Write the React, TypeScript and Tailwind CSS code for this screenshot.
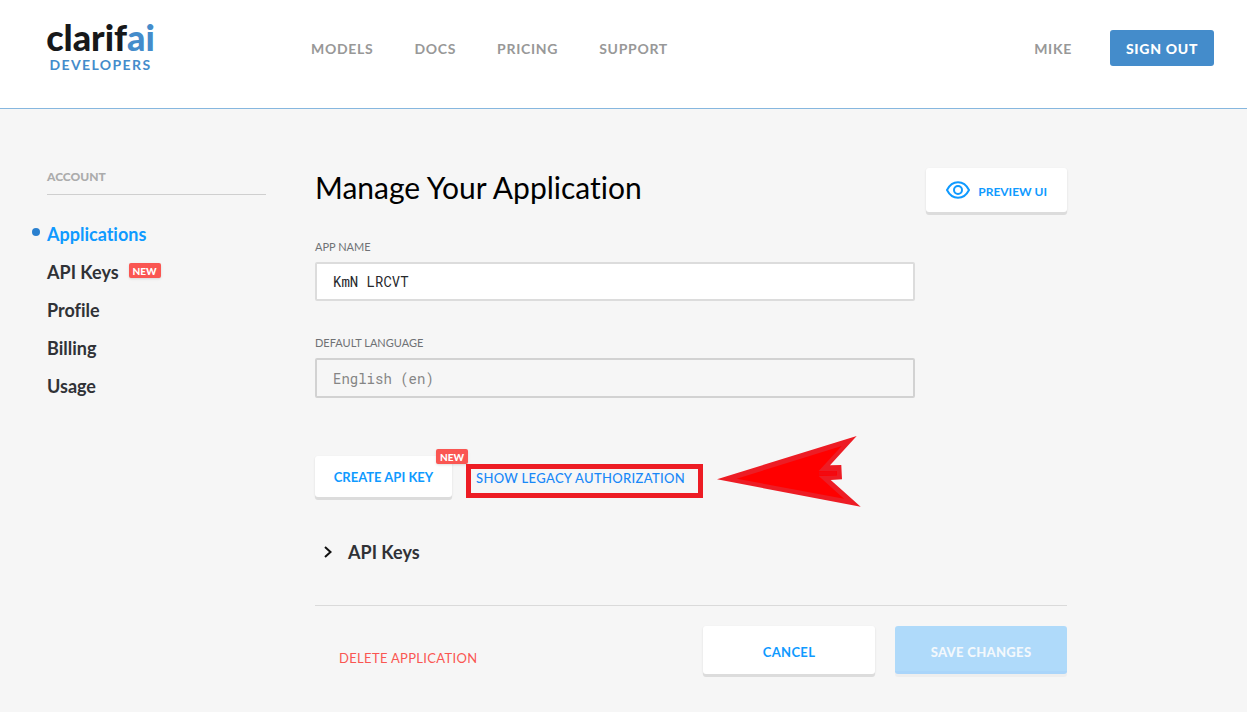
import type { ReactNode } from "react";

const navLinks = ["MODELS", "DOCS", "PRICING", "SUPPORT"];

const accountLinks = [
  { label: "Applications", active: true },
  { label: "API Keys", isNew: true },
  { label: "Profile" },
  { label: "Billing" },
  { label: "Usage" },
];

function NewBadge() {
  return (
    <span className="flex h-[15px] w-8 items-center justify-center rounded-xs bg-[#fa5652] pt-px text-[10px] leading-none font-black text-white shadow-sm">
      NEW
    </span>
  );
}

function RaisedButton({ className, children }: { className: string; children: ReactNode }) {
  return (
    <button
      type="button"
      className={`flex items-center justify-center rounded-[3px] bg-white font-bold text-[#0f9aff] shadow-[0_3px_0_#dcdcdc,0_1px_2px_#d8d8d8] ${className}`}
    >
      {children}
    </button>
  );
}

function EyeIcon() {
  return (
    <svg className="h-[18px] w-6" viewBox="0 0 24 18" fill="none" stroke="currentColor" strokeWidth="2" aria-hidden="true">
      <path d="M1 9C3.5 4 7.4 1.2 12 1.2S20.500 4 23 9c-2.500 5-6.400 7.800-11 7.800S3.500 14 1 9Z" />
      <circle cx="12" cy="9" r="4" />
    </svg>
  );
}

function Logo() {
  return (
    <a href="#" className="flex w-[107px] flex-col items-center">
      <span className="text-[36px] leading-9 font-black text-[#17181a]">
        clarif<span className="text-[#448ccb]">ai</span>
      </span>
      <span className="mt-0.5 text-sm leading-4 font-bold tracking-widest text-[#448ccb]">DEVELOPERS</span>
    </a>
  );
}

function Arrow() {
  return (
    <svg className="h-[72px] w-[145px]" viewBox="0 0 145 72" aria-hidden="true">
      <path d="M0 44.300 139.700 1 113 30.300 124.300 30 125 44.300 113.700 45 143.700 71.700Z" fill="#ed1c24" />
      <path d="M19.700 43.700 124.700 11 101.700 36 120 36v4.500l-18.300.5 25.300 22.700Z" fill="#f00" />
      <path d="M102 38.500 119.500 38" stroke="#f30910" strokeWidth="4" />
    </svg>
  );
}

export default function App() {
  return (
    <div className="min-h-screen bg-[#f6f6f6] font-[Lato,sans-serif] text-[#303236] [font-variant-ligatures:none]">
      <header className="flex h-[109px] items-start border-b border-[#86b7df] bg-white pr-[33px] pl-[47px]">
        <div className="w-[264px] shrink-0 pt-[19px]">
          <Logo />
        </div>
        <nav className="flex flex-1 gap-[41px] pt-[39px]">
          {navLinks.map((label) => (
            <a key={label} href="#" className="text-sm leading-5 font-bold tracking-wider text-[#989898]">
              {label}
            </a>
          ))}
        </nav>
        <div className="flex items-start gap-[38px] pt-[30px]">
          <a href="#" className="pt-[9px] text-sm leading-5 font-bold tracking-wider text-[#989898]">
            MIKE
          </a>
          <button type="button" className="h-9 w-[104px] rounded-[3px] bg-[#448ccb] pt-px text-sm font-black tracking-wider text-white">
            SIGN OUT
          </button>
        </div>
      </header>

      <div className="flex items-start gap-[49px] pt-[59px] pb-8 pl-[47px]">
        <aside className="w-[219px] shrink-0">
          <h2 className="border-b border-[#cfcfcf] pb-2 text-xs leading-[18px] font-black text-[#acacac]">ACCOUNT</h2>
          <ul className="mt-5">
            {accountLinks.map(({ label, active, isNew }) => (
              <li key={label} className="relative flex h-[38px] items-center gap-[10px]">
                {active && <span className="absolute top-[13px] left-[-15px] size-2 rounded-full bg-[#2a80cf]" />}
                <a href="#" className={active ? "text-lg font-bold text-[#0f9aff]" : "text-lg font-bold"}>
                  {label}
                </a>
                {isNew && (
                  <div className="pb-1">
                    <NewBadge />
                  </div>
                )}
              </li>
            ))}
          </ul>
        </aside>

        <main className="max-w-[752px] flex-1">
          <div className="flex items-start justify-between">
            <h1 className="text-[30px] leading-[38px] text-black">Manage Your Application</h1>
            <RaisedButton className="h-11 gap-2 px-5 text-xs">
              <EyeIcon />
              <span className="pt-[3px]">PREVIEW UI</span>
            </RaisedButton>
          </div>

          <form className="mt-[27px] max-w-[600px]">
            <label htmlFor="app-name" className="block text-[11px] leading-4 text-[#6f7275]">
              APP NAME
            </label>
            <input
              id="app-name"
              type="text"
              defaultValue="KmN LRCVT"
              className="mt-[7px] h-[39px] w-full rounded-xs border-2 border-[#dcdcdc] bg-white px-4 font-['Roboto_Mono','Liberation_Mono',monospace] text-sm text-[#26282b]"
            />
            <label htmlFor="language" className="mt-[34px] block text-[11px] leading-4 text-[#6f7275]">
              DEFAULT LANGUAGE
            </label>
            <select
              id="language"
              disabled
              className="mt-[7px] h-10 w-full appearance-none rounded-xs border-2 border-[#d2d2d2] bg-transparent px-4 pt-0.5 font-['Roboto_Mono','Liberation_Mono',monospace] text-sm text-[#858585] opacity-100"
            >
              <option>English (en)</option>
            </select>
          </form>

          <div className="mt-[58px] flex items-center">
            <div className="relative">
              <RaisedButton className="h-[41px] w-[137px] pt-0.5 text-[13px]">CREATE API KEY</RaisedButton>
              <div className="absolute top-[-7px] right-[-16px]">
                <NewBadge />
              </div>
            </div>
            <div className="relative ml-6">
              <button type="button" className="text-[13px] leading-5 font-medium tracking-wide text-[#1888f8]">
                SHOW LEGACY AUTHORIZATION
              </button>
              <span className="pointer-events-none absolute top-[-1px] left-[-10px] h-[34px] w-[237px] border-[5px] border-[#ed1c24]" />
              <div className="pointer-events-none absolute top-[-30px] left-[241px]">
                <Arrow />
              </div>
            </div>
          </div>

          <button type="button" className="mt-10 flex items-center gap-4 pl-[9px] text-lg leading-[30px] font-bold">
            <svg className="h-3 w-2" viewBox="0 0 8 12" fill="none" stroke="#111" strokeWidth="2" aria-hidden="true">
              <path d="M1 1 6.500 6 1 11" />
            </svg>
            API Keys
          </button>

          <footer className="mt-[38px] flex items-start border-t border-[#dadada] pt-5">
            <button type="button" className="mt-[22px] ml-6 text-[13px] leading-5 tracking-wide text-[#fa5652]">
              DELETE APPLICATION
            </button>
            <div className="ml-auto flex gap-5">
              <RaisedButton className="h-12 w-[172px] pt-1.5 text-[13px] tracking-wide">CANCEL</RaisedButton>
              <button
                type="button"
                disabled
                className="h-12 w-[172px] rounded-[3px] border-b-3 border-[#aad5fa] bg-[#afdafa] pt-2 text-[13px] font-black tracking-wide text-[#f3f8fc] shadow-[0_3px_0_#eeeeee]"
              >
                SAVE CHANGES
              </button>
            </div>
          </footer>
        </main>
      </div>
    </div>
  );
}
